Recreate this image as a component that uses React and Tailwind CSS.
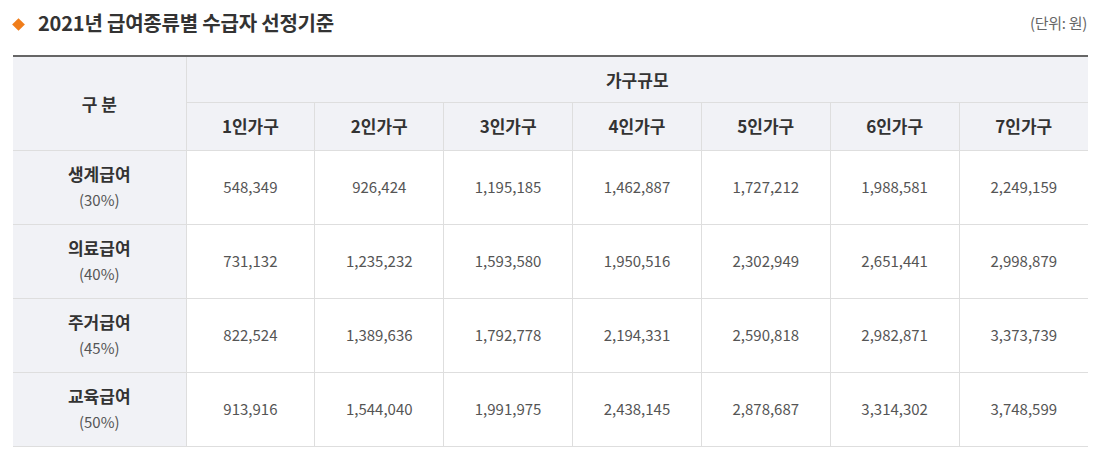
import React from "react";

const sizes = ["1인가구", "2인가구", "3인가구", "4인가구", "5인가구", "6인가구", "7인가구"];

const rows = [
  { name: "생계급여", pct: "(30%)", values: ["548,349", "926,424", "1,195,185", "1,462,887", "1,727,212", "1,988,581", "2,249,159"] },
  { name: "의료급여", pct: "(40%)", values: ["731,132", "1,235,232", "1,593,580", "1,950,516", "2,302,949", "2,651,441", "2,998,879"] },
  { name: "주거급여", pct: "(45%)", values: ["822,524", "1,389,636", "1,792,778", "2,194,331", "2,590,818", "2,982,871", "3,373,739"] },
  { name: "교육급여", pct: "(50%)", values: ["913,916", "1,544,040", "1,991,975", "2,438,145", "2,878,687", "3,314,302", "3,748,599"] },
];

export default function App() {
  return (
    <div
      className="bg-white w-[1099px] h-[452px] px-[12px] pt-[8px] text-[#555]"
      style={{ fontFamily: '"Noto Sans CJK KR", "Noto Sans", sans-serif' }}
    >
      {/* Title */}
      <div className="flex items-center justify-between h-[30px] mb-[17px]">
        <div className="flex items-center">
          <span className="inline-block w-[9px] h-[9px] bg-[#f07d1a] rotate-45 ml-[2px] mr-[15px] mt-[3px]" />
          <h2 className="text-[20px] font-bold text-[#333] tracking-[-0.2px]">2021년 급여종류별 수급자 선정기준</h2>
        </div>
        <span className="text-[15px] text-[#666] tracking-[-0.3px]">(단위: 원)</span>
      </div>

      {/* Table */}
      <table className="w-[1075px] ml-[1px] border-collapse table-fixed border-t-2 border-t-[#666] text-[15px]">
        <colgroup>
          <col className="w-[173px]" />
          {sizes.map((s) => (
            <col key={s} />
          ))}
        </colgroup>
        <thead>
          <tr className="h-[46px] bg-[#f1f2f6]">
            <th rowSpan={2} className="border-b border-r border-[#dedede] font-bold text-[17px] text-[#333]">
              구 분
            </th>
            <th colSpan={7} className="border-b border-[#dedede] font-bold text-[17px] text-[#333]">
              가구규모
            </th>
          </tr>
          <tr className="h-[48px] bg-[#f1f2f6]">
            {sizes.map((s, i) => (
              <th
                key={s}
                className={`border-b border-[#dedede] font-bold text-[17px] text-[#333] ${i < 6 ? "border-r" : ""}`}
              >
                {s}
              </th>
            ))}
          </tr>
        </thead>
        <tbody>
          {rows.map((r) => (
            <tr key={r.name} className="h-[74px]">
              <th className="bg-[#f1f2f6] border-b border-r border-[#dedede] font-normal leading-[26px]">
                <div className="font-bold text-[17px] text-[#333]">{r.name}</div>
                <div className="text-[15px] text-[#555]">{r.pct}</div>
              </th>
              {r.values.map((v, i) => (
                <td
                  key={i}
                  className={`text-center border-b border-[#dedede] ${i < 6 ? "border-r" : ""}`}
                >
                  {v}
                </td>
              ))}
            </tr>
          ))}
        </tbody>
      </table>
    </div>
  );
}
